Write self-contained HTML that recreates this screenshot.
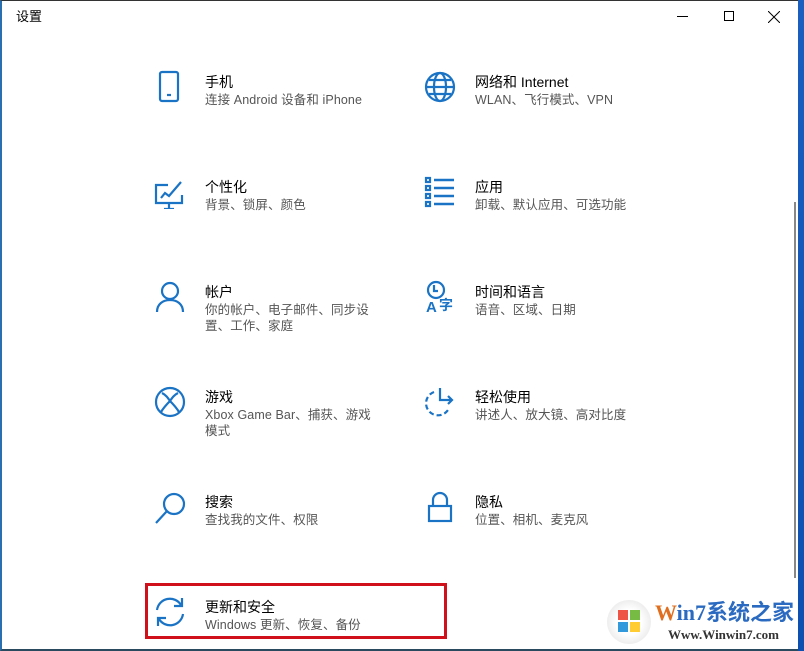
<!DOCTYPE html>
<html><head><meta charset="utf-8"><style>
*{margin:0;padding:0;box-sizing:border-box}
body{width:804px;height:651px;overflow:hidden;background:#fff;font-family:"Liberation Sans","Noto Sans CJK SC",sans-serif;position:relative}
.win{position:absolute;left:0;top:0;width:798px;height:651px;background:#fff;border-top:1px solid #333;border-left:2px solid #2a70b0;border-bottom:2px solid #2a4a60}
.blue{position:absolute;left:798px;top:0;width:6px;height:651px;background:linear-gradient(#1a5fc0,#0c4fb0)}
.t{position:absolute;font-size:14px;color:#000;line-height:18px}
.s{position:absolute;font-size:12.5px;color:#555;line-height:16px;letter-spacing:0.1px}
svg.i{position:absolute;fill:none;stroke:#1a73c4;stroke-width:2.2}
</style></head><body>
<div class="win"></div><div class="blue"></div>
<div class="t" style="left:16px;top:8px;font-size:13px">设置</div>
<div style="position:absolute;left:677px;top:16px;width:11px;height:1px;background:#000"></div>
<div style="position:absolute;left:724px;top:11px;width:10px;height:10px;border:1px solid #000"></div>
<svg style="position:absolute;left:768px;top:11px" width="12" height="12"><path d="M0 0L12 12M12 0L0 12" stroke="#000" stroke-width="1"/></svg>
<div style="position:absolute;left:794px;top:202px;width:2px;height:376px;background:#888"></div>

<svg class="i" style="left:158px;top:70px" width="24" height="34"><rect x="2" y="2" width="18" height="29" rx="2"/><path d="M9 25h4"/></svg>
<div class="t" style="left:205px;top:73px">手机</div>
<div class="s" style="left:205px;top:92px">连接 Android 设备和 iPhone</div>
<svg class="i" style="left:424px;top:71px" width="32" height="32"><circle cx="16" cy="16" r="14"/><ellipse cx="16" cy="16" rx="6" ry="14"/><path d="M2 16h28M5 9h22M5 23h22"/></svg>
<div class="t" style="left:475px;top:73px">网络和 Internet</div>
<div class="s" style="left:475px;top:92px">WLAN、飞行模式、VPN</div>

<svg class="i" style="left:154px;top:179px" width="32" height="30"><path d="M14 6H2v18h26v-8"/><path d="M10 30h10M15 24v6"/><path d="M7 19l4-5 4 3 12-14"/></svg>
<div class="t" style="left:205px;top:178px">个性化</div>
<div class="s" style="left:205px;top:197px">背景、锁屏、颜色</div>
<svg class="i" style="left:424px;top:176px" width="32" height="32" stroke-width="2"><rect x="2" y="2" width="4" height="4"/><rect x="2" y="10" width="4" height="4"/><rect x="2" y="18" width="4" height="4"/><rect x="2" y="26" width="4" height="4"/><path d="M10 4h20M10 12h20M10 20h20M10 28h20" stroke-width="2.6"/></svg>
<div class="t" style="left:475px;top:178px">应用</div>
<div class="s" style="left:475px;top:197px">卸载、默认应用、可选功能</div>

<svg class="i" style="left:155px;top:281px" width="30" height="32"><circle cx="15" cy="10" r="8"/><path d="M2 31c0-8 6-12 13-12s13 4 13 12"/></svg>
<div class="t" style="left:205px;top:283px">帐户</div>
<div class="s" style="left:205px;top:302px">你的帐户、电子邮件、同步设<br>置、工作、家庭</div>
<svg class="i" style="left:424px;top:280px" width="34" height="34" stroke-width="2"><circle cx="12" cy="10" r="8"/><path d="M10 5v6h4"/><text x="2" y="32" font-size="15" fill="#1a73c4" stroke="none" font-family="Liberation Sans" font-weight="bold">A</text><text x="15" y="30" font-size="14" fill="#1a73c4" stroke="none" font-family="Noto Sans CJK SC" font-weight="bold">字</text></svg>
<div class="t" style="left:475px;top:283px">时间和语言</div>
<div class="s" style="left:475px;top:302px">语音、区域、日期</div>

<svg class="i" style="left:154px;top:386px" width="32" height="32" stroke-width="2.6"><circle cx="16" cy="16" r="14"/><path d="M8 7c4 2 6 5 8 8 2-3 4-6 8-8M7 26c3-5 6-8 9-11 3 3 6 6 9 11"/></svg>
<div class="t" style="left:205px;top:388px">游戏</div>
<div class="s" style="left:205px;top:407px">Xbox Game Bar、捕获、游戏<br>模式</div>
<svg class="i" style="left:424px;top:386px" width="34" height="32" stroke-width="2"><path d="M10 6a12 12 0 1 0 14 18" stroke-dasharray="5 3"/><path d="M16 2v12h12M24 10l4 4-4 4"/></svg>
<div class="t" style="left:475px;top:388px">轻松使用</div>
<div class="s" style="left:475px;top:407px">讲述人、放大镜、高对比度</div>

<svg class="i" style="left:154px;top:491px" width="34" height="34"><circle cx="20" cy="13" r="10"/><path d="M13 20L2 32"/></svg>
<div class="t" style="left:205px;top:493px">搜索</div>
<div class="s" style="left:205px;top:512px">查找我的文件、权限</div>
<svg class="i" style="left:427px;top:491px" width="26" height="32" stroke-width="2.6"><rect x="2" y="15" width="22" height="15"/><path d="M6 15V9a7 7 0 0 1 14 0v6"/></svg>
<div class="t" style="left:475px;top:493px">隐私</div>
<div class="s" style="left:475px;top:512px">位置、相机、麦克风</div>

<div style="position:absolute;left:145px;top:583px;width:302px;height:56px;border:3px solid #d0101a"></div>
<svg class="i" style="left:154px;top:596px" width="32" height="32"><path d="M3 14A13 13 0 0 1 27 9"/><path d="M28 2v8h-8"/><path d="M29 18A13 13 0 0 1 5 23"/><path d="M4 30v-8h8"/></svg>
<div class="t" style="left:205px;top:598px">更新和安全</div>
<div class="s" style="left:205px;top:617px">Windows 更新、恢复、备份</div>

<div style="position:absolute;left:607px;top:600px;width:44px;height:44px;border-radius:50%;background:radial-gradient(circle,#fff 40%,#ddd 100%)"></div>
<div style="position:absolute;left:618px;top:610px;width:10px;height:10px;background:#e54"></div>
<div style="position:absolute;left:630px;top:610px;width:10px;height:10px;background:#7b4"></div>
<div style="position:absolute;left:618px;top:622px;width:10px;height:10px;background:#39d"></div>
<div style="position:absolute;left:630px;top:622px;width:10px;height:10px;background:#fc3"></div>
<div style="position:absolute;left:655px;top:600px;font-size:22px;font-weight:bold;line-height:26px;color:#e07020;font-family:'Liberation Serif','Noto Sans CJK SC',serif">W<span style="color:#2a6ac0">in7</span><span style="color:#2a6ac0">系统之家</span></div>
<div style="position:absolute;left:668px;top:627px;font-size:13px;font-weight:bold;color:#333;font-family:'Liberation Serif',serif">Www.Winwin7.com</div>
</body></html>
